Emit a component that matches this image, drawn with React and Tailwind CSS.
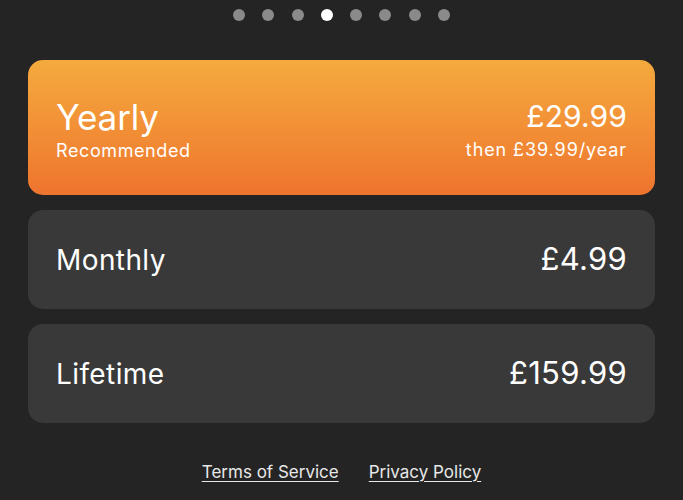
import React from 'react'

const plans = [
    { name: 'Monthly', price: '£4.99' },
    { name: 'Lifetime', price: '£159.99' },
]

function Dots({ count, active }) {
    return (
        <div className="flex justify-center gap-[17.3px] pt-[9px]">
            {Array.from({ length: count }).map((_, i) => (
                <span
                    key={i}
                    className={i === active ? 'w-3 h-3 rounded-full bg-white' : 'w-3 h-3 rounded-full bg-[#8a8a8a]'}
                ></span>
            ))}
        </div>
    )
}

export default function App() {
    return (
        <div className="w-full h-[500px] bg-[#242424] text-white font-['Inter','Liberation_Sans',sans-serif] overflow-hidden">
            <Dots count={8} active={3} />

            <div className="flex flex-col gap-[15px] px-[28px] mt-[39px]">
                {/* Recommended plan */}
                <div className="h-[135px] rounded-[15px] bg-gradient-to-b from-[#f4aa3e] to-[#ee742e] flex justify-between items-center px-[28px] pt-[4px]">
                    <div className="flex flex-col">
                        <span className="text-[35px] leading-[42px] tracking-[-0.1px]">Yearly</span>
                        <span className="text-[18px] leading-[26px] tracking-[0.6px]">Recommended</span>
                    </div>
                    <div className="flex flex-col items-end">
                        <span className="text-[30px] leading-[40px] tracking-[0.1px]">£29.99</span>
                        <span className="text-[18px] leading-[28px] tracking-[0.9px]">then £39.99/year</span>
                    </div>
                </div>

                {plans.map((p) => (
                    <div key={p.name} className="h-[99px] rounded-[15px] bg-[#393939] flex justify-between items-center px-[28px]">
                        <span className="text-[28px] tracking-[0.4px]">{p.name}</span>
                        <span className="text-[31px] tracking-[0.3px]">{p.price}</span>
                    </div>
                ))}
            </div>

            <div className="flex justify-center gap-[30px] mt-[37px] text-[17px] text-[#e8e8e8]">
                <a className="underline underline-offset-[3px]">Terms of Service</a>
                <a className="underline underline-offset-[3px]">Privacy Policy</a>
            </div>
        </div>
    )
}
